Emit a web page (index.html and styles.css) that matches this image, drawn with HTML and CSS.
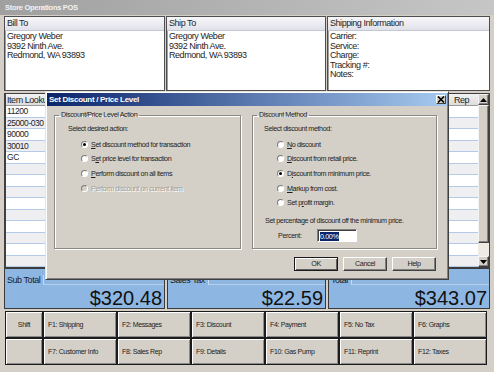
FILE: index.html
```html
<!DOCTYPE html>
<html>
<head>
<meta charset="utf-8">
<link rel="stylesheet" href="styles.css">
</head>
<body>
<div class="app">
  <div class="titlebar">Store Operations POS</div>
  <div class="main">
    <div class="addr">
      <section class="box">
        <div class="box-h">Bill To</div>
        <div class="box-b">Gregory Weber<br>9392 Ninth Ave.<br>Redmond, WA 93893</div>
      </section>
      <section class="box">
        <div class="box-h">Ship To</div>
        <div class="box-b">Gregory Weber<br>9392 Ninth Ave.<br>Redmond, WA 93893</div>
      </section>
      <section class="box">
        <div class="box-h">Shipping Information</div>
        <div class="box-b">Carrier:<br>Service:<br>Charge:<br>Tracking #:<br>Notes:</div>
      </section>
    </div>

    <div class="grid">
      <div class="rows">
        <div class="row head"><span class="c1">Item Lookup</span><span class="c2"></span><span class="c3">Rep</span></div>
        <div class="row"><span class="c1">11200</span><span class="c2"></span><span class="c3"></span></div>
        <div class="row alt"><span class="c1">25000-030</span><span class="c2"></span><span class="c3"></span></div>
        <div class="row"><span class="c1">90000</span><span class="c2"></span><span class="c3"></span></div>
        <div class="row alt"><span class="c1">30010</span><span class="c2"></span><span class="c3"></span></div>
        <div class="row"><span class="c1">GC</span><span class="c2"></span><span class="c3"></span></div>
        <div class="row alt"><span class="c1"></span><span class="c2"></span><span class="c3"></span></div>
        <div class="row"><span class="c1"></span><span class="c2"></span><span class="c3"></span></div>
        <div class="row alt"><span class="c1"></span><span class="c2"></span><span class="c3"></span></div>
        <div class="row"><span class="c1"></span><span class="c2"></span><span class="c3"></span></div>
        <div class="row alt"><span class="c1"></span><span class="c2"></span><span class="c3"></span></div>
        <div class="row"><span class="c1"></span><span class="c2"></span><span class="c3"></span></div>
        <div class="row alt"><span class="c1"></span><span class="c2"></span><span class="c3"></span></div>
        <div class="row"><span class="c1"></span><span class="c2"></span><span class="c3"></span></div>
        <div class="row alt"><span class="c1"></span><span class="c2"></span><span class="c3"></span></div>
      </div>
      <div class="vscroll">
        <div class="sbtn"><svg width="7" height="4" viewBox="0 0 7 4"><path d="M3.5 0 L7 4 L0 4 Z" fill="#000"/></svg></div>
        <div class="thumb"></div>
        <div class="track"></div>
        <div class="sbtn"><svg width="7" height="4" viewBox="0 0 7 4"><path d="M0 0 L7 0 L3.5 4 Z" fill="#000"/></svg></div>
      </div>
    </div>

    <div class="totals">
      <div class="tot">
        <div class="tot-head"><span class="tot-label">Sub Total</span><span class="tot-line"></span></div>
        <div class="amt">$320.48</div>
      </div>
      <div class="tot">
        <div class="tot-head"><span class="tot-label">Sales Tax</span><span class="tot-line"></span></div>
        <div class="amt">$22.59</div>
      </div>
      <div class="tot">
        <div class="tot-head"><span class="tot-label">Total</span><span class="tot-line"></span></div>
        <div class="amt">$343.07</div>
      </div>
    </div>

    <div class="fkeys">
      <div class="fk center">Shift</div>
      <div class="fk">F1: Shipping</div>
      <div class="fk">F2: Messages</div>
      <div class="fk">F3: Discount</div>
      <div class="fk">F4: Payment</div>
      <div class="fk">F5: No Tax</div>
      <div class="fk">F6: Graphs</div>
      <div class="fk center"></div>
      <div class="fk">F7: Customer Info</div>
      <div class="fk">F8: Sales Rep</div>
      <div class="fk">F9: Details</div>
      <div class="fk">F10: Gas Pump</div>
      <div class="fk">F11: Reprint</div>
      <div class="fk">F12: Taxes</div>
    </div>
  </div>

  <div class="dlg">
    <div class="dlg-title">
      <span class="dlg-caption">Set Discount / Price Level</span>
      <span class="xbtn"><svg width="8" height="7" viewBox="0 0 8 7"><path d="M1 0.5 L7 6.5 M7 0.5 L1 6.5" stroke="#000" stroke-width="1.6"/></svg></span>
    </div>
    <div class="dlg-body">
      <div class="groups">
        <fieldset class="grp g1">
          <legend>Discount/Price Level Action</legend>
          <div class="lead">Select desired action:</div>
          <div class="opt"><i class="rb on"></i><span><u>S</u>et discount method for transaction</span></div>
          <div class="opt"><i class="rb"></i><span>S<u>e</u>t price level for transaction</span></div>
          <div class="opt"><i class="rb"></i><span><u>P</u>erform discount on all items</span></div>
          <div class="opt dis"><i class="rb"></i><span>Perform discount on current item</span></div>
        </fieldset>
        <fieldset class="grp g2">
          <legend>Discount Method</legend>
          <div class="lead">Select discount method:</div>
          <div class="opt"><i class="rb"></i><span><u>N</u>o discount</span></div>
          <div class="opt"><i class="rb"></i><span><u>D</u>iscount from retail price.</span></div>
          <div class="opt"><i class="rb on"></i><span>D<u>i</u>scount from minimum price.</span></div>
          <div class="opt"><i class="rb"></i><span><u>M</u>arkup from cost.</span></div>
          <div class="opt"><i class="rb"></i><span>Set p<u>r</u>ofit margin.</span></div>
          <div class="note">Set percentage of discount off the minimum price.</div>
          <div class="pct"><span class="pct-l">Percent:</span><span class="inp"><span class="sel">0.00%</span></span></div>
        </fieldset>
      </div>
      <div class="btns">
        <span class="btn def">OK</span>
        <span class="btn">Cancel</span>
        <span class="btn">Help</span>
      </div>
    </div>
  </div>
</div>
</body>
</html>
```

FILE: styles.css
```css
* { box-sizing: border-box; }
html, body { margin: 0; padding: 0; }
body {
  width: 494px;
  height: 372px;
  overflow: hidden;
  background: #d4d0c8;
  font-family: "Liberation Sans", Arial, sans-serif;
  color: #1e1e1e;
}
.app {
  position: relative;
  width: 494px;
  height: 372px;
  overflow: hidden;
  background: #d4d0c8;
}
.titlebar {
  height: 15px;
  background: linear-gradient(90deg, #a0a0a0, #c6c6c6);
  color: #f2f2f2;
  font-weight: bold;
  font-size: 7.5px;
  letter-spacing: -0.3px;
  line-height: 15px;
  padding-left: 5px;
}
.main { padding: 1px 4px 0; }

/* address panels */
.addr {
  display: grid;
  grid-template-columns: 161px 160px 163px;
  gap: 1px;
  height: 75px;
}
.box {
  border: 1px solid #4e4e4e;
  box-shadow: inset 1px 1px 0 #a0a0a0;
  background: #fff;
  display: flex;
  flex-direction: column;
  font-size: 9px;
  letter-spacing: -0.45px;
}
.box-h {
  height: 14px;
  background: linear-gradient(#f7f7fa, #e1e1ea);
  border-bottom: 1px solid #c2c7d4;
  line-height: 13px;
  padding-left: 2px;
}
.box-b {
  line-height: 9.5px;
  padding: 1px 2px 0;
}

/* grid */
.grid {
  margin-top: 2px;
  height: 175px;
  display: flex;
  background: #fff;
  border: 1px solid #404040;
  border-left-width: 2px;
}
.rows { flex: 1; display: flex; flex-direction: column; }
.row {
  display: flex;
  height: 11.5px;
  border-bottom: 1px solid #b3cbe6;
  font-size: 8.5px;
  letter-spacing: -0.45px;
  line-height: 10.5px;
}
.row.alt { background: #efeff1; }
.row.head {
  height: 12px;
  background: linear-gradient(#f2f2f2, #dcdcdc);
  border-bottom: 1px solid #9a9a9a;
  line-height: 12px;
  font-size: 9px;
}
.c1 { width: 52px; padding-left: 1px; white-space: nowrap; border-right: 1px solid #d0d0d0; }
.c2 { flex: 1; }
.c3 { width: 30px; padding-left: 5px; border-left: 1px solid #d0d0d0; }
.vscroll {
  width: 11px;
  display: flex;
  flex-direction: column;
  background: #eeebe4;
}
.sbtn {
  height: 11px;
  background: #d4d0c8;
  border: 1px solid;
  border-color: #f4f4f4 #404040 #404040 #f4f4f4;
  box-shadow: inset -1px -1px 0 #808080;
  display: flex;
  align-items: center;
  justify-content: center;
}
.thumb {
  height: 138px;
  background: #d4d0c8;
  border: 1px solid;
  border-color: #f4f4f4 #404040 #404040 #f4f4f4;
  box-shadow: inset -1px -1px 0 #808080;
}
.track { flex: 1; }

/* totals */
.totals {
  display: grid;
  grid-template-columns: 161px 159px 162px;
  gap: 2px;
  height: 41px;
}
.tot {
  background: #8db7e2;
  border: 1px solid #3a3a3a;
  display: flex;
  flex-direction: column;
  padding-top: 6px;
}
.tot-head { display: flex; height: 10px; }
.tot-label {
  font-size: 9px;
  letter-spacing: -0.45px;
  line-height: 10px;
  padding: 0 3px 0 2px;
  border-right: 1px solid #c7daee;
  color: #1a1a1a;
}
.tot-line { flex: 1; border-bottom: 1px solid #b6cfe9; }
.amt {
  margin-top: auto;
  font-size: 20px;
  line-height: 19px;
  text-align: right;
  padding-right: 2px;
  color: #111;
}

/* function keys */
.fkeys {
  display: grid;
  grid-template-columns: 36px repeat(6, 72px);
  grid-template-rows: 25px 25px;
  gap: 2px;
  padding: 1px;
  margin: 2px 3px 0 1px;
  background: #1c1c1c;
}
.fk {
  background: #d4d0c8;
  box-shadow: inset 1px 1px 0 #fff, inset -1px -1px 0 #8a8a8a;
  font-size: 7px;
  letter-spacing: -0.35px;
  display: flex;
  align-items: center;
  padding-left: 4px;
  color: #222;
}
.fk.center { justify-content: center; padding-left: 0; }

/* dialog */
.dlg {
  position: absolute;
  left: 45px;
  top: 91px;
  width: 404px;
  height: 189px;
  background: #d4d0c8;
  border: 1px solid;
  border-color: #e6e4de #404040 #404040 #e6e4de;
  box-shadow: inset 1px 1px 0 #fff, inset -1px -1px 0 #808080;
  padding: 1px;
}
.dlg-title {
  height: 13px;
  background: linear-gradient(90deg, #0a246a, #a6caf0);
  display: flex;
  align-items: center;
  justify-content: space-between;
  padding-left: 2px;
}
.dlg-caption {
  color: #fff;
  font-weight: bold;
  font-size: 8px;
  letter-spacing: -0.3px;
  line-height: 13px;
}
.xbtn {
  width: 10px;
  height: 9px;
  margin-right: 1px;
  background: #d4d0c8;
  border: 1px solid;
  border-color: #fff #404040 #404040 #fff;
  display: flex;
  align-items: center;
  justify-content: center;
}
.dlg-body { padding: 4px 0 0 7px; font-size: 7.2px; letter-spacing: -0.4px; }
.groups { display: flex; gap: 11px; }
.grp {
  margin: 0;
  padding: 2px 0 0;
  min-width: 0;
  height: 139px;
  border: 1px solid #8c8a84;
  box-shadow: inset 1px 1px 0 #fff, 1px 1px 0 #fff;
}
.g1 { width: 187px; }
.g2 { width: 185px; }
.grp legend {
  margin-left: 4px;
  padding: 0 2px;
  line-height: 10px;
}
.lead { height: 14.7px; line-height: 14.7px; white-space: nowrap; }
.g1 .lead { padding-left: 13px; }
.g2 .lead { padding-left: 11px; }
.opt {
  height: 14.7px;
  display: flex;
  align-items: center;
  white-space: nowrap;
}
.g1 .opt { padding-left: 26px; }
.g2 .opt { padding-left: 24px; }
.opt u { text-decoration-thickness: 1px; text-underline-offset: 1px; }
.rb {
  width: 7px;
  height: 7px;
  border-radius: 50%;
  border: 1px solid;
  border-color: #7a7a7a #fff #fff #7a7a7a;
  background: #fff;
  margin-right: 3px;
  display: flex;
  align-items: center;
  justify-content: center;
  flex: none;
}
.rb.on::after {
  content: "";
  width: 3px;
  height: 3px;
  border-radius: 50%;
  background: #000;
}
.opt.dis { color: #a2a09a; text-shadow: 1px 1px 0 #fff; }
.opt.dis .rb { background: #d4d0c8; }
.note {
  margin-top: 4px;
  height: 14px;
  line-height: 14px;
  padding-left: 12px;
  white-space: nowrap;
}
.pct {
  margin-top: 1px;
  height: 13px;
  display: flex;
  align-items: center;
  padding-left: 25px;
}
.pct-l { width: 39px; flex: none; }
.inp {
  width: 40px;
  height: 13px;
  background: #fff;
  border: 1px solid;
  border-color: #808080 #fff #fff #808080;
  box-shadow: inset 1px 1px 0 #404040;
  padding: 1px 0 0 2px;
  display: flex;
  align-items: center;
}
.sel {
  background: #0a246a;
  color: #fff;
  line-height: 9px;
  padding: 0 1px 0 0;
}
.btns {
  display: flex;
  justify-content: flex-end;
  gap: 5px;
  margin-top: 8px;
  padding-right: 11px;
}
.btn {
  width: 44px;
  height: 14px;
  background: #d4d0c8;
  border: 1px solid;
  border-color: #fff #404040 #404040 #fff;
  box-shadow: inset -1px -1px 0 #808080;
  line-height: 12px;
  text-align: center;
}
.btn.def {
  border-color: #1a1a1a;
  box-shadow: inset 1px 1px 0 #fff, inset -1px -1px 0 #606060;
}
```
